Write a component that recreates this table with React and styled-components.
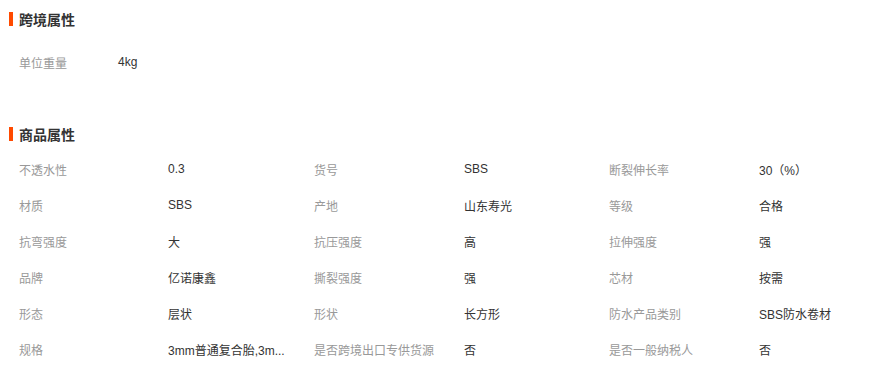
import React from "react";
import styled, { createGlobalStyle } from "styled-components";

const GlobalStyle = createGlobalStyle`
  body {
    margin: 0;
    background: #fff;
    font-family: "Liberation Sans", "Noto Sans CJK SC", sans-serif;
    font-size: 12px;
    color: #333;
  }
`;

const crossBorder = [[["单位重量", "4kg"]]];

const product = [
  [["不透水性", "0.3"], ["货号", "SBS"], ["断裂伸长率", "30（%）"]],
  [["材质", "SBS"], ["产地", "山东寿光"], ["等级", "合格"]],
  [["抗弯强度", "大"], ["抗压强度", "高"], ["拉伸强度", "强"]],
  [["品牌", "亿诺康鑫"], ["撕裂强度", "强"], ["芯材", "按需"]],
  [["形态", "层状"], ["形状", "长方形"], ["防水产品类别", "SBS防水卷材"]],
  [["规格", "3mm普通复合胎,3m..."], ["是否跨境出口专供货源", "否"], ["是否一般纳税人", "否"]],
];

const Page = styled.div`
  width: 870px;
  padding-top: 9px;
`;

const Section = styled.section`
  margin-bottom: ${(p) => p.$gap}px;
`;

const Title = styled.h3`
  display: flex;
  align-items: center;
  gap: 6px;
  margin: 0 0 ${(p) => p.$after}px 9px;
  height: 20px;
  font-size: 14px;
  font-weight: bold;
  color: #333;

  &::before {
    content: "";
    width: 4px;
    height: 14px;
    background: #ff4a00;
  }
`;

const Row = styled.div`
  display: grid;
  grid-template-columns: ${(p) => p.$cols};
  padding-left: 19px;
  height: 36px;
  align-items: center;
`;

const Label = styled.span`
  color: #999;
  white-space: nowrap;
`;

const Value = styled.span`
  color: #333;
  white-space: nowrap;
`;

const Props = ({ rows, cols }) =>
  rows.map((row, i) => (
    <Row key={i} $cols={cols}>
      {row.map(([k, v]) => (
        <React.Fragment key={k}>
          <Label>{k}</Label>
          <Value>{v}</Value>
        </React.Fragment>
      ))}
    </Row>
  ));

export default function App() {
  return (
    <>
      <GlobalStyle />
      <Page>
        <Section $gap={44}>
          <Title $after={15}>跨境属性</Title>
          <Props rows={crossBorder} cols="99px 200px" />
        </Section>
        <Section $gap={0}>
          <Title $after={7}>商品属性</Title>
          <Props rows={product} cols="149px 146px 150px 145px 150px 145px" />
        </Section>
      </Page>
    </>
  );
}
